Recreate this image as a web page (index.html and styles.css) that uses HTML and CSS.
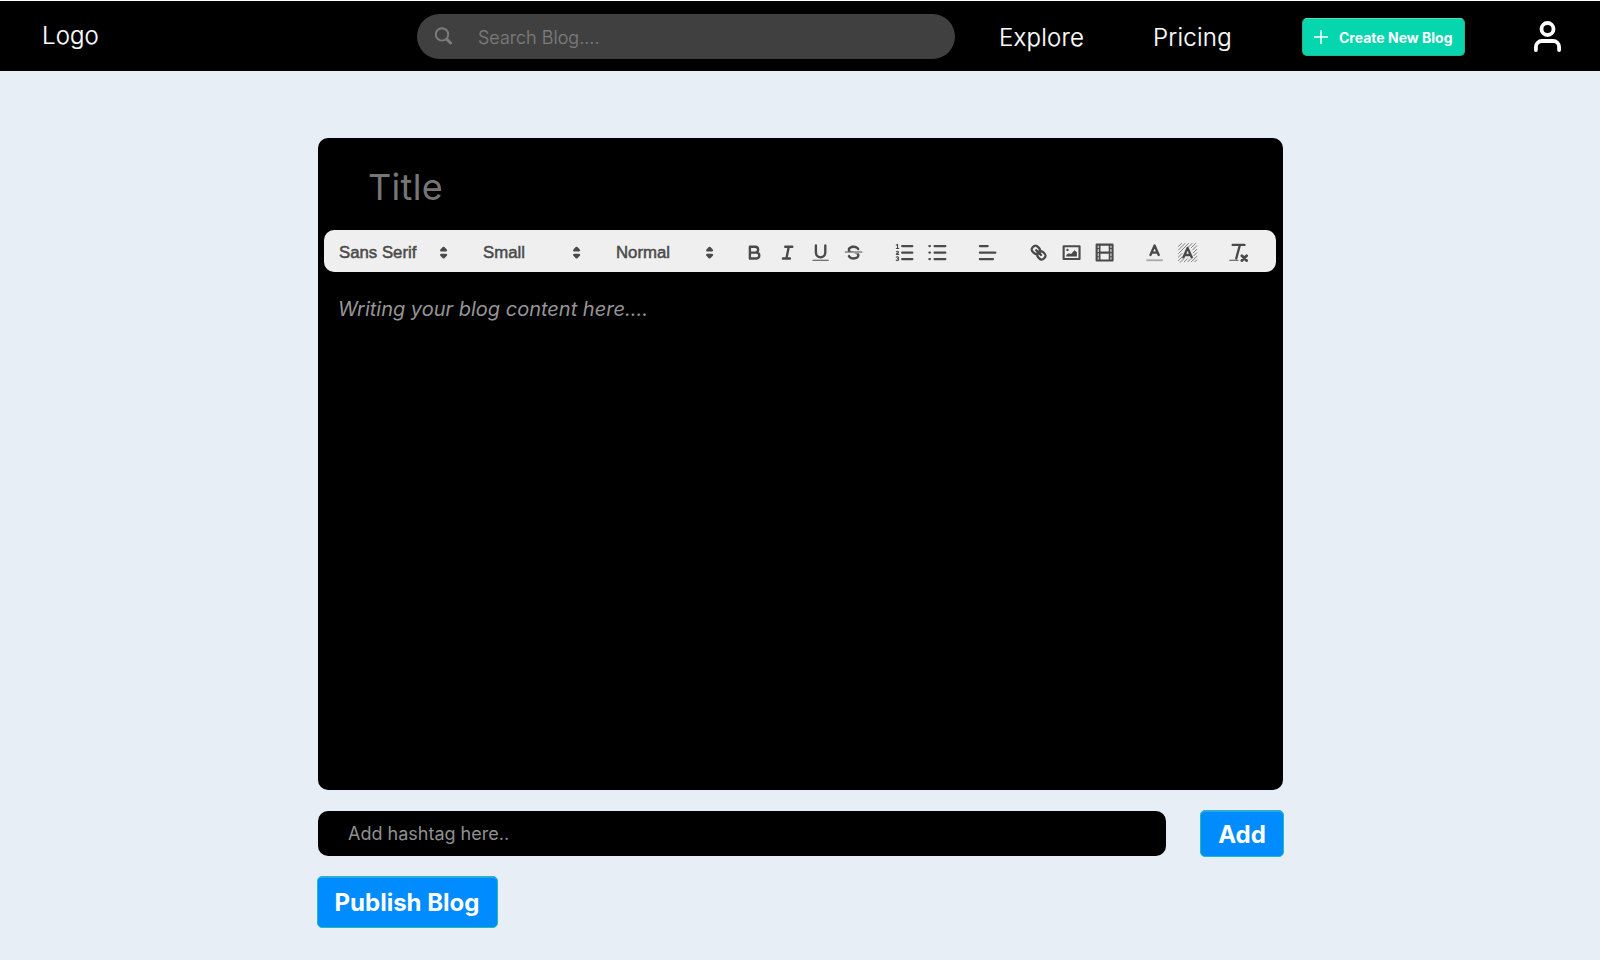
FILE: index.html
```html
<!DOCTYPE html>
<html lang="en">
<head>
<meta charset="utf-8">
<title>Create Blog</title>
<link rel="stylesheet" href="styles.css">
</head>
<body>
<header class="navbar">
  <a class="logo">Logo</a>
  <div class="search">
    <svg class="search-icon" width="18" height="18" viewBox="0 0 18 18"><circle cx="7" cy="7.400" r="6.200" fill="none" stroke="currentColor" stroke-width="1.900"/><path d="M12 12.400l3.600 3.600" stroke="currentColor" stroke-width="2.900" stroke-linecap="round"/></svg>
    <span class="search-text">Search Blog....</span>
  </div>
  <a class="nav-link explore">Explore</a>
  <a class="nav-link pricing">Pricing</a>
  <button class="create">
    <svg width="14" height="14" viewBox="0 0 14 14"><path d="M7 .6v12.800M.6 7h12.800" stroke="#fff" stroke-width="1.500" stroke-linecap="round"/></svg>
    <span>Create New Blog</span>
  </button>
  <svg class="user" width="30" height="34" viewBox="0 0 30 34" fill="none" stroke="#fff" stroke-width="3.800" stroke-linecap="round"><circle cx="14.500" cy="9" r="6"/><path d="M2.900 30v-3a6 6 0 0 1 6-6h11.200a6 6 0 0 1 6 6v3"/></svg>
</header>
<main class="page">
  <section class="editor">
    <div class="title">Title</div>
    <div class="toolbar">
      <div class="picker font"><span>Sans Serif</span><svg class="q" viewBox="0 0 18 18"><path class="s f" d="M7 11l2 2 2-2zM7 7l2-2 2 2z"/></svg></div>
      <div class="picker"><span>Small</span><svg class="q" viewBox="0 0 18 18"><path class="s f" d="M7 11l2 2 2-2zM7 7l2-2 2 2z"/></svg></div>
      <div class="picker heading"><span>Normal</span><svg class="q" viewBox="0 0 18 18"><path class="s f" d="M7 11l2 2 2-2zM7 7l2-2 2 2z"/></svg></div>
      <div class="group">
        <svg class="q" viewBox="0 0 18 18"><path class="s" d="M5 4h4.500a2.500 2.500 0 0 1 0 5H5zM5 9h5.500a2.500 2.500 0 0 1 0 5H5z"/></svg>
        <svg class="q" viewBox="0 0 18 18"><path class="s" d="M7 4h6M5 14h6M8 14l2-10"/></svg>
        <svg class="q" viewBox="0 0 18 18"><path class="s" d="M5 3v6a4 4 0 0 0 8 0V3"/><rect class="f" x="2" y="15" width="14" height="1" rx=".5"/></svg>
        <svg class="q" viewBox="0 0 18 18"><path class="s thin" d="M16 8.500H2"/><path class="f" d="M9.007 8C6.542 7.791 6 7.519 6 6.500 6 5.792 7.283 5 9 5c1.571 0 2.765.679 2.969 1.309a1 1 0 0 0 1.900-.617C13.356 4.106 11.354 3 9 3 6.200 3 4 4.538 4 6.500a3.200 3.200 0 0 0 .5 1.843Z"/><path class="f" d="M8.984 10C11.457 10.208 12 10.479 12 11.500c0 .708-1.283 1.500-3 1.500-1.571 0-2.765-.679-2.969-1.309a1 1 0 1 0-1.900.617C4.644 13.894 6.646 15 9 15c2.800 0 5-1.538 5-3.500a3.200 3.200 0 0 0-.5-1.843Z"/></svg>
      </div>
      <div class="group">
        <svg class="q" viewBox="0 0 18 18"><path class="s" d="M7 3.500h8.500M7 9h8.500M7 14.500h8.500"/><path class="s thin" d="M2 5.500h2M2 2.500l1-.4v3.400M4 10.500H2c0-1 1.850-1 1.850-2 0-.8-1.400-.9-1.800-.2M2 12.900c.5-.6 1.900-.4 1.850.4 0 .5-.4.8-.9.8.6 0 1 .3 1 .8 0 .9-1.400 1.100-2 .4"/></svg>
        <svg class="q" viewBox="0 0 18 18"><path class="s" d="M6.500 3.500h9M6.500 9h9M6.500 14.500h9"/><path class="s dots" d="M2 3.500h.5M2 9h.5M2 14.500h.5"/></svg>
      </div>
      <div class="group"><svg class="q" viewBox="0 0 18 18"><path class="s" d="M2.500 9h13M2.500 14.500h11M2.500 3.500H9"/></svg></div>
      <div class="group">
        <svg class="q" viewBox="0 0 18 18"><path class="s" d="M7 7l4 4"/><path class="s" d="M8.900 4.577a3.476 3.476 0 0 1 .36 4.679A3.476 3.476 0 0 1 4.577 8.900C3.185 7.500 2.035 6.400 4.217 4.217S7.500 3.185 8.900 4.577Z"/><path class="s" d="M13.423 9.100a3.476 3.476 0 0 0-4.679-.36 3.476 3.476 0 0 0 .36 4.679c1.392 1.392 2.500 2.542 4.679.36s1.031-3.279-.36-4.679Z"/></svg>
        <svg class="q" viewBox="0 0 18 18"><path class="s frame" d="M1.500 3h15v12h-15z"/><circle class="f" cx="5.500" cy="6.700" r="1"/><path class="f" d="M4.500 12.300V11l2-1.500 2 .8 3-3.300 2 1.800v3.500z"/></svg>
        <svg class="q" viewBox="0 0 18 18"><path class="s frame" d="M1.500 1.500h15v15h-15z"/><path class="f" d="M4 2h1.500v14H4zM12.500 2H14v14h-1.500zM5 8h8v2H5zM2 5h2v1H2zM2 8.500h2v1H2zM2 12h2v1H2zM14 5h2v1h-2zM14 8.500h2v1h-2zM14 12h2v1h-2z"/></svg>
      </div>
      <div class="group">
        <svg class="q" viewBox="0 0 18 18"><path class="s faint" d="M2 15.500h14"/><path class="s" d="M5.500 11L9 3l3.500 8M11.600 9H6.400"/></svg>
        <svg class="q" viewBox="0 0 18 18"><path class="hatch" d="M1 4l3-3M1 7l6-6M1 10l9-9M1 13l3.500-3.500M1 16l3.500-3.500M2.500 17.500L6 14M6 17l3-3M9 17l3-3M9.500 4.500L13 1M12 5l4-4M13 7l4-4M13.500 9.500L17 6M14 12l3-3M12 17l5-5M15 17l2-2"/><path class="s" d="M5.500 13L9 5l3.500 8M11.630 11H6.380"/></svg>
      </div>
      <div class="group"><svg class="q" viewBox="0 0 18 18"><path class="s" d="M4 2.500h10M7 14L10 3"/><path class="s cross" d="M11.800 11.700l4 4M15.800 11.700l-4 4"/><rect class="f" x="1" y="15" width="8" height="1" rx=".5"/></svg></div>
    </div>
    <div class="content">Writing your blog content here....</div>
  </section>
  <div class="tag-row">
    <div class="hashtag">Add hashtag here..</div>
    <button class="btn add">Add</button>
  </div>
  <button class="btn publish">Publish Blog</button>
</main>
</body>
</html>
```
FILE: styles.css
```css
* { box-sizing: border-box; }
body { margin: 0; height: 960px; background: #e7eef6; font-family: Inter, sans-serif; overflow: hidden; }
button { font-family: inherit; padding: 0; }
.navbar { display: flex; align-items: center; height: 71px; border-top: 1px solid #fff; background: #000; color: #fff; }
.logo { flex: none; width: 375px; padding: 0 0 1px 42px; font-size: 24px; font-weight: 300; line-height: 30px; letter-spacing: .1px; -webkit-text-stroke: .2px currentColor; }
.search { display: flex; align-items: center; width: 538px; height: 45px; margin-left: 42px; padding-left: 18px; border-radius: 23px; background: #404040; color: #7c7c7c; }
.search-text { margin-left: 25px; padding-top: 2px; font-size: 18px; font-weight: 300; -webkit-text-stroke: .2px currentColor; }
.nav-link { font-size: 24px; font-weight: 300; letter-spacing: .25px; padding-top: 3px; -webkit-text-stroke: .2px currentColor; }
.explore { width: 154px; margin-left: 44px; }
.pricing { width: 149px; }
.create { display: flex; align-items: center; width: 163px; height: 38px; margin-top: 2px; padding-left: 11px; gap: 11px; border: 1px solid #22b58f; border-top-color: #4be3bd; border-radius: 5px; background: #06d6ad; color: #fff; font-size: 14px; font-weight: 700; white-space: nowrap; }
.user { margin: 2px 0 0 68px; }
.search, .create, .user, .nav-link { flex: none; }

.page { width: 966px; margin: 67px 0 0 318px; }
.editor { width: 965px; height: 652px; border-radius: 10px; background: #000; overflow: hidden; }
.title { height: 92px; padding: 26px 0 0 50px; font-size: 36px; line-height: 46px; font-weight: 400; letter-spacing: .3px; color: #767676; }
.toolbar { display: flex; align-items: center; width: 952px; height: 42px; margin-left: 6px; padding: 3px 0 0 15px; border-radius: 10px; background: #efefef; color: #4a4a4a; }
.picker { display: flex; align-items: center; justify-content: space-between; width: 104px; margin-right: 29px; font: 16.800px "Liberation Sans", sans-serif; -webkit-text-stroke: .5px #4a4a4a; }
.picker.font { width: 115px; }
.picker.heading { margin-right: 18.200px; }
.picker, .group, .q { flex: none; }
.group { display: flex; margin-right: 17.600px; }
.group .q { margin: 0 5.900px; }
.q { display: block; width: 21.200px; height: 21.200px; overflow: visible; }
.s { fill: none; stroke: #4a4a4a; stroke-width: 2; stroke-linecap: round; stroke-linejoin: round; }
.f { fill: #4a4a4a; }
.thin { stroke-width: 1; }
.dots { stroke-width: 1.800; }
.cross { stroke-width: 2.400; }
.frame { stroke-width: 2; transform: translate(.9px, .9px) scale(.9); }
.faint { stroke: #aaa; stroke-linecap: butt; stroke-width: 1.600; }
.hatch { fill: none; stroke: #777; stroke-width: .8; }
.content { padding: 24px 0 0 20px; font-size: 20px; line-height: 26px; font-style: italic; font-weight: 400; color: #969696; }

.tag-row { display: flex; align-items: center; justify-content: space-between; height: 47px; margin-top: 20px; }
.hashtag { width: 848px; height: 45px; padding-left: 30px; border-radius: 10px; background: #000; color: #909090; font-size: 18px; font-weight: 400; line-height: 46px; }
.btn { border: 1px solid #20bdb8; border-radius: 5px; background: #008bff; color: #fff; font-size: 24px; font-weight: 700; box-shadow: inset 0 1px #369ff5; }
.add { width: 84px; height: 47px; padding-top: 1px; }
.publish { display: block; width: 181px; height: 52px; margin: 19px 0 0 -1px; padding-right: 1px; }
```
